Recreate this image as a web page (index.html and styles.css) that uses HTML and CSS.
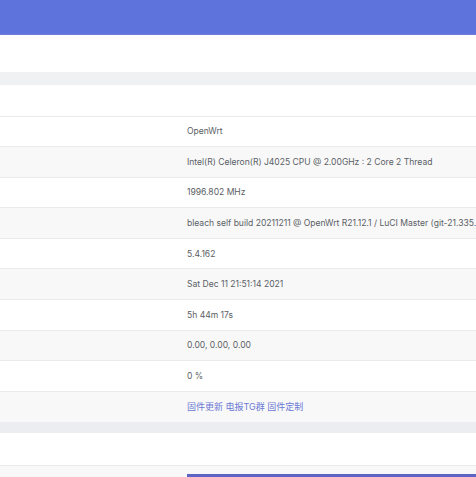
FILE: index.html
```html
<!DOCTYPE html>
<html>
<head>
<meta charset="utf-8">
<link rel="stylesheet" href="styles.css">
</head>
<body>
<header class="topbar"></header>
<div class="spacer-top"></div>
<div class="band"></div>
<table class="info">
  <tr class="head"><td class="label"></td><td class="value"></td></tr>
  <tr><td class="label"></td><td class="value">OpenWrt</td></tr>
  <tr class="alt"><td class="label"></td><td class="value">Intel(R) Celeron(R) J4025 CPU @ 2.00GHz : 2 Core 2 Thread</td></tr>
  <tr><td class="label"></td><td class="value">1996.802 MHz</td></tr>
  <tr class="alt"><td class="label"></td><td class="value">bleach self build 20211211 @ OpenWrt R21.12.1 / LuCI Master (git-21.335.31917-bba1c3f)</td></tr>
  <tr><td class="label"></td><td class="value">5.4.162</td></tr>
  <tr class="alt"><td class="label"></td><td class="value">Sat Dec 11 21:51:14 2021</td></tr>
  <tr><td class="label"></td><td class="value">5h 44m 17s</td></tr>
  <tr class="alt"><td class="label"></td><td class="value">0.00, 0.00, 0.00</td></tr>
  <tr><td class="label"></td><td class="value">0 %</td></tr>
  <tr class="alt"><td class="label"></td><td class="value cjk"><a class="lnk" href="#">固件更新</a> <a class="lnk" href="#">电报TG群</a> <a class="lnk" href="#">固件定制</a></td></tr>
</table>
<div class="band band2"></div>
<div class="spacer-mid"></div>
<table class="info info2">
  <tr class="alt"><td class="label"></td><td class="value"><div class="bar"></div></td></tr>
</table>
</body>
</html>
```
FILE: styles.css
```css
html, body {
  margin: 0;
  padding: 0;
  background: #ffffff;
  overflow: hidden;
  height: 477px;
}
body {
  font-family: "Inter", "Noto Sans CJK SC", sans-serif;
  font-size: 8.55px;
  color: #5a5e64;
}
.topbar {
  height: 34px;
  background: #5e73dc;
  border-bottom: 1px solid #6b7fd8;
}
.spacer-top {
  height: 37px;
  background: #ffffff;
}
.band {
  height: 13px;
  background: #f0f1f3;
}
.band2 {
  height: 11px;
  background: #ecedf0;
}
.spacer-mid {
  height: 32px;
  background: #ffffff;
}
.info {
  width: 100%;
  border-collapse: collapse;
  table-layout: fixed;
}
.info tr {
  height: 30.6px;
}
.info tr.head {
  height: 31px;
}
.info td {
  border-top: 1px solid #eaeaea;
  padding: 0;
  vertical-align: middle;
}
.info tr.head td {
  border-top: none;
}
.info tr.alt td {
  background: #f8f8f9;
}
.label {
  width: 187px;
}
.value {
  white-space: nowrap;
  overflow: hidden;
}
.cjk {
  font-size: 9px;
}
.lnk {
  color: #6b78d4;
  text-decoration: none;
}
.info2 tr {
  height: 12px;
}
.info2 td {
  vertical-align: bottom;
}
.bar {
  height: 3px;
  background: #5e64c4;
}
```
